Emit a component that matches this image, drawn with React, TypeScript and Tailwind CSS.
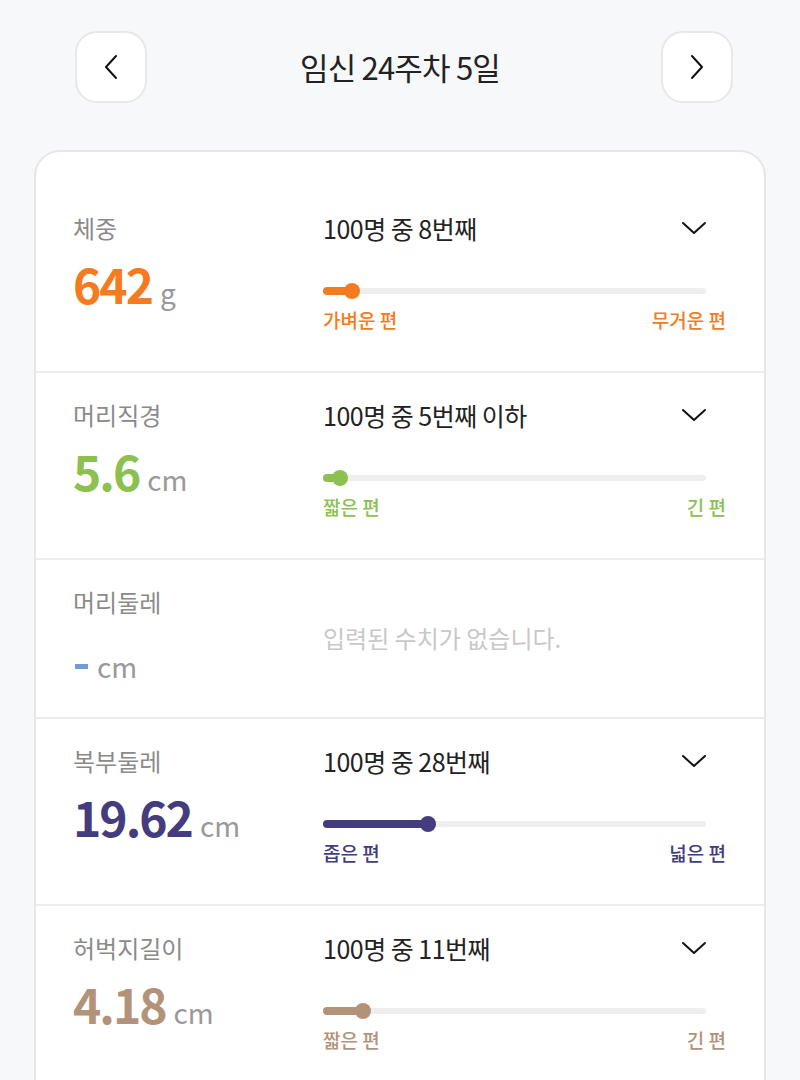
type Metric = {
  label: string;
  value: string;
  unit: string;
  rank?: string;
  pct?: number;
  low?: string;
  high?: string;
  color: string;
  fill: string;
};

const metrics: Metric[] = [
  { label: '체중', value: '642', unit: 'g', rank: '100명 중 8번째', pct: 7.5, low: '가벼운 편', high: '무거운 편', color: 'text-[#f47b20]', fill: 'bg-[#f47b20]' },
  { label: '머리직경', value: '5.6', unit: 'cm', rank: '100명 중 5번째 이하', pct: 4.5, low: '짧은 편', high: '긴 편', color: 'text-[#8cc152]', fill: 'bg-[#8cc152]' },
  { label: '머리둘레', value: '-', unit: 'cm', color: 'text-[#6f9bd6]', fill: 'bg-[#6f9bd6]' },
  { label: '복부둘레', value: '19.62', unit: 'cm', rank: '100명 중 28번째', pct: 27.5, low: '좁은 편', high: '넓은 편', color: 'text-[#433c7e]', fill: 'bg-[#433c7e]' },
  { label: '허벅지길이', value: '4.18', unit: 'cm', rank: '100명 중 11번째', pct: 10.5, low: '짧은 편', high: '긴 편', color: 'text-[#b3927a]', fill: 'bg-[#b3927a]' },
];

const Chevron = ({ dir }: { dir: 'left' | 'right' | 'down' }) => {
  if (dir === 'down') {
    return (
      <svg width="26" height="16" viewBox="0 0 26 16" fill="none" className="text-[#111111]">
        <path d="M2 3 L13 13 L24 3" stroke="currentColor" strokeWidth="2" strokeLinecap="round" strokeLinejoin="round" />
      </svg>
    );
  }
  return (
    <svg width="16" height="26" viewBox="0 0 16 26" fill="none" className="text-[#111111]">
      <path
        d={dir === 'left' ? 'M13 2 L3 13 L13 24' : 'M3 2 L13 13 L3 24'}
        stroke="currentColor"
        strokeWidth="2"
        strokeLinecap="round"
        strokeLinejoin="round"
      />
    </svg>
  );
};

const MetricRow = ({ m, first }: { m: Metric; first: boolean }) => (
  <div
    className={`grid grid-cols-[250px_1fr] pl-[37px] pr-[38px] ${
      first ? 'pt-[60px]' : 'border-t-2 border-[#ececec] pt-[26px]'
    } ${m.rank ? 'pb-[38px]' : 'pb-[31px]'}`}
  >
    <div>
      <div className="text-[24px] leading-[32px] text-[#8a8a8a]">{m.label}</div>
      {m.rank ? (
        <div className="mt-[9px] flex items-baseline gap-[8px]">
          <span className={`text-[48px] leading-[60px] font-bold tracking-[-2px] ${m.color}`}>{m.value}</span>
          <span className="text-[28px] text-[#999999]">{m.unit}</span>
        </div>
      ) : (
        <div className="mt-[28px] flex items-center gap-[9px] pl-[2px]">
          <span className={`block h-[5px] w-[13px] ${m.fill}`} />
          <span className="text-[28px] leading-[40px] text-[#999999]">{m.unit}</span>
        </div>
      )}
    </div>
    {m.rank ? (
      <div>
        <div className="flex items-center justify-between pr-[19px]">
          <span className="text-[25px] leading-[32px] tracking-[-0.5px] text-[#222222]">{m.rank}</span>
          <Chevron dir="down" />
        </div>
        <div className="relative mr-[20px] mt-[39px] h-[16px]">
          <div className="absolute left-0 right-0 top-[5px] h-[6px] rounded-full bg-[#eeeeee]" />
          <div className={`absolute left-0 top-[4px] h-[8px] rounded-full ${m.fill}`} style={{ width: `${m.pct}%` }} />
          <div
            className={`absolute top-0 h-[16px] w-[16px] -translate-x-1/2 rounded-full ${m.fill}`}
            style={{ left: `${m.pct}%` }}
          />
        </div>
        <div className={`mt-[8px] flex justify-between text-[19px] leading-[26px] font-medium ${m.color}`}>
          <span>{m.low}</span>
          <span>{m.high}</span>
        </div>
      </div>
    ) : (
      <div className="flex items-center pt-[4px] text-[24px] text-[#c8c8c8]">입력된 수치가 없습니다.</div>
    )}
  </div>
);

export default function App() {
  return (
    <div
      className="min-h-[1080px] bg-[#f7f8fa] px-[34px] pt-[31px]"
      style={{ fontFamily: '"Noto Sans CJK KR", "Noto Sans", sans-serif' }}
    >
      <div className="flex items-center justify-between pl-[41px] pr-[33px]">
        <button className="flex h-[72px] w-[72px] items-center justify-center rounded-[22px] border-2 border-[#e8e8e8] bg-white">
          <Chevron dir="left" />
        </button>
        <h1 className="pr-[8px] text-[31px] tracking-[-0.8px] text-[#222222]">임신 24주차 5일</h1>
        <button className="flex h-[72px] w-[72px] items-center justify-center rounded-[22px] border-2 border-[#e8e8e8] bg-white">
          <Chevron dir="right" />
        </button>
      </div>
      <div className="mt-[47px] min-h-[940px] rounded-t-[26px] border-2 border-b-0 border-[#e6e6e6] bg-white">
        {metrics.map((m, i) => (
          <MetricRow key={m.label} m={m} first={i === 0} />
        ))}
      </div>
    </div>
  );
}
